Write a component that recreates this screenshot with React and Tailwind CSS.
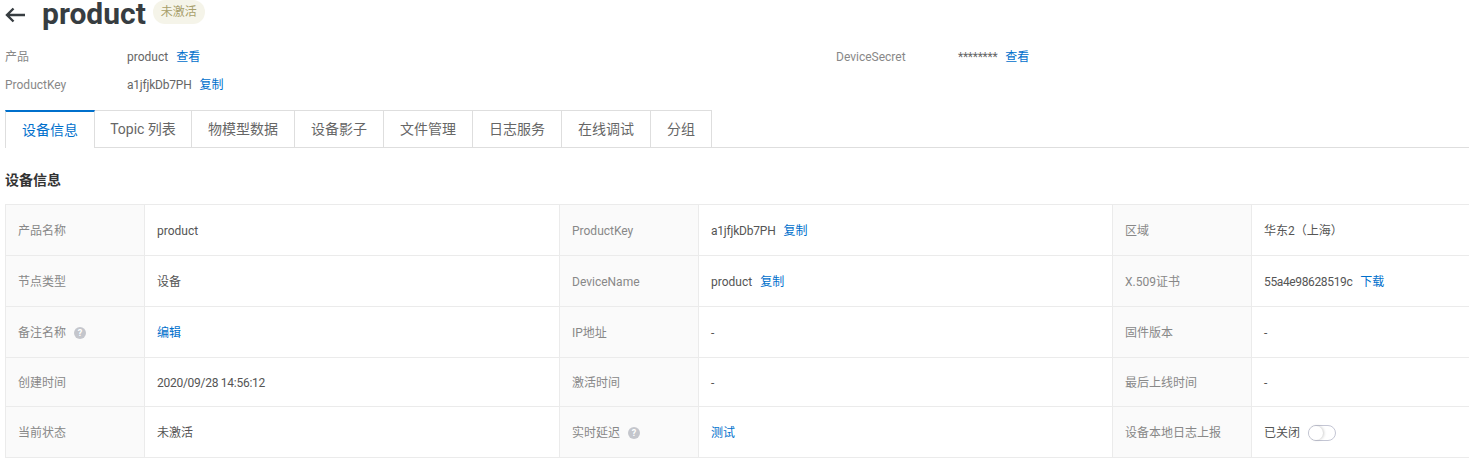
import React from "react";

const Link = ({ children, className = "" }) => (
  <span className={`text-[#0070cc] ${className}`}>{children}</span>
);

const Help = () => (
  <span className="ml-2 inline-flex h-3 w-3 items-center justify-center rounded-full bg-[#c4c6cc] text-[9px] font-bold leading-none text-white">
    ?
  </span>
);

const rows = [
  {
    height: "h-[51px]",
    cells: [
      ["产品名称", <span>product</span>],
      ["ProductKey", <span><span className="tracking-[-0.2px]">a1jfjkDb7PH</span><Link className="ml-2">复制</Link></span>],
      ["区域", <span>华东2（上海）</span>],
    ],
  },
  {
    height: "h-[51px]",
    cells: [
      ["节点类型", <span>设备</span>],
      ["DeviceName", <span>product<Link className="ml-2">复制</Link></span>],
      ["X.509证书", <span><span className="tracking-[-0.36px]">55a4e98628519c</span><Link className="ml-2">下载</Link></span>],
    ],
  },
  {
    height: "h-[51px]",
    cells: [
      [<span className="flex items-center">备注名称<Help /></span>, <Link>编辑</Link>],
      ["IP地址", <span>-</span>],
      ["固件版本", <span>-</span>],
    ],
  },
  {
    height: "h-[49px]",
    cells: [
      ["创建时间", <span className="tracking-[-0.27px]">2020/09/28 14:56:12</span>],
      ["激活时间", <span>-</span>],
      ["最后上线时间", <span>-</span>],
    ],
  },
  {
    height: "h-[51px]",
    cells: [
      ["当前状态", <span>未激活</span>],
      [<span className="flex items-center">实时延迟<Help /></span>, <Link>测试</Link>],
      [
        "设备本地日志上报",
        <span className="flex items-center">
          已关闭
          <span className="ml-2 flex h-4 w-7 items-center rounded-full border border-[#c4c6d4] bg-white">
            <span className="h-[14px] w-[14px] rounded-full bg-white shadow-[1px_0_3px_rgba(0,0,0,0.2)]" />
          </span>
        </span>,
      ],
    ],
  },
];

const tabs = [
  ["设备信息", "w-[90px]"],
  ["Topic 列表", "w-[97px]"],
  ["物模型数据", "w-[103px]"],
  ["设备影子", "w-[89px]"],
  ["文件管理", "w-[89px]"],
  ["日志服务", "w-[89px]"],
  ["在线调试", "w-[89px]"],
  ["分组", "w-[61px]"],
];

const App = () => {
  return (
    <div
      className="h-[459px] w-[1469px] overflow-hidden bg-white pl-[5px] text-xs text-[#333]"
      style={{ fontFamily: 'Roboto, "Noto Sans CJK SC", sans-serif' }}
    >
      {/* header */}
      <div className="flex h-[28px] items-center">
        <svg width="21" height="16" viewBox="0 0 21 16" className="translate-y-[1px] text-[#373d41]" fill="none" stroke="currentColor" strokeWidth="2.4">
          <path d="M20 8H2M8.5 1.5L2 8l6.5 6.5" />
        </svg>
        <span className="ml-[16px] text-[30px] leading-[28px] font-bold text-[#373d41]">product</span>
        <span className="ml-[7px] flex h-[24px] w-[52px] -translate-y-[2px] items-center justify-center rounded-full bg-[#f5f4e9] text-xs text-[#a89f6b]">
          未激活
        </span>
      </div>

      {/* device summary */}
      <div className="mt-[15px] flex h-[28px] items-center">
        <span className="w-[122px] text-[#888]">产品</span>
        <span className="w-[709px] text-[#666]">
          product<Link className="ml-2">查看</Link>
        </span>
        <span className="w-[122px] text-[#888]">DeviceSecret</span>
        <span className="text-[#666]">
          <span className="tracking-[-0.25px]">********</span><Link className="ml-2">查看</Link>
        </span>
      </div>
      <div className="flex h-[28px] items-center">
        <span className="w-[122px] text-[#888]">ProductKey</span>
        <span className="text-[#666]">
          <span className="tracking-[-0.2px]">a1jfjkDb7PH</span><Link className="ml-2">复制</Link>
        </span>
      </div>

      {/* tabs */}
      <div className="mt-[11px] flex h-[38px] border-b border-[#dedede]">
        {tabs.map(([label, width], i) => (
          <div
            key={label}
            className={
              i === 0
                ? `${width} -mb-px flex items-center justify-center border-t-2 border-r border-l border-t-[#0070cc] border-r-[#dedede] border-l-[#dedede] bg-white text-sm text-[#0070cc]`
                : `${width} flex items-center justify-center border-t border-r border-[#dedede] text-sm text-[#666]`
            }
          >
            {label}
          </div>
        ))}
      </div>

      <div className="mt-[24px] h-[17px] text-sm leading-[17px] font-bold text-[#333]">设备信息</div>

      {/* info table */}
      <div className="mt-[15px] w-[1470px] border-t border-[#ebebeb]">
        {rows.map((row, i) => (
          <div key={i} className={`${row.height} grid grid-cols-[140px_414px_140px_413px_140px_223px] border-b border-[#ebebeb]`}>
            {row.cells.map(([label, value], j) => (
              <React.Fragment key={j}>
                <div className="flex items-center border-r border-l border-[#ebebeb] bg-[#fafafa] pt-[2px] pl-3 text-[#888]">{label}</div>
                <div className="flex items-center pt-[2px] pl-3 text-[#555]">{value}</div>
              </React.Fragment>
            ))}
          </div>
        ))}
      </div>
    </div>
  );
};

export default App;
